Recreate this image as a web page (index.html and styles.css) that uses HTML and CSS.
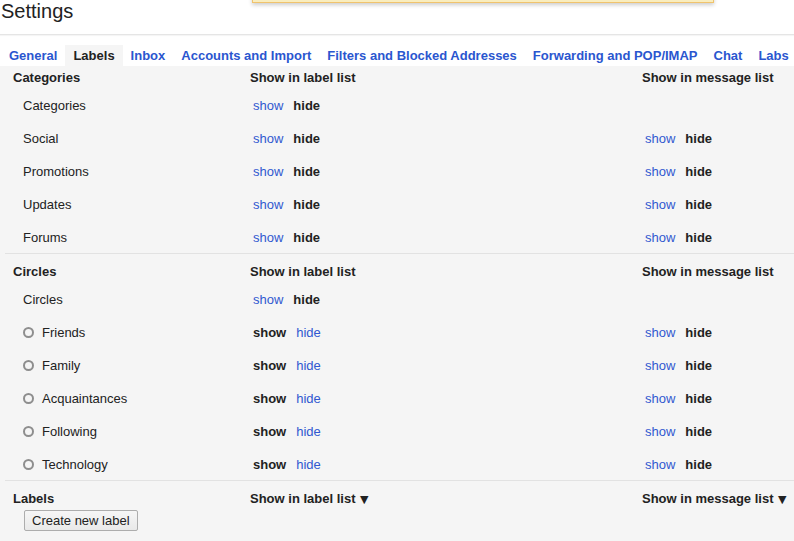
FILE: index.html
```html
<!DOCTYPE html>
<html>
<head>
<meta charset="utf-8">
<link rel="stylesheet" href="styles.css">
</head>
<body>
<div class="notice"></div>
<div class="topbar"><h1 class="title">Settings</h1></div>
<nav class="tabs">
  <a class="tab">General</a>
  <a class="tab active">Labels</a>
  <a class="tab">Inbox</a>
  <a class="tab">Accounts and Import</a>
  <a class="tab">Filters and Blocked Addresses</a>
  <a class="tab">Forwarding and POP/IMAP</a>
  <a class="tab">Chat</a>
  <a class="tab">Labs</a>
</nav>
<main class="panel">
  <section class="section first">
    <div class="row head">
      <div class="c1">Categories</div>
      <div class="c2">Show in label list</div>
      <div class="c3">Show in message list</div>
    </div>
    <div class="row">
      <div class="c1 name">Categories</div>
      <div class="c2 opts"><span class="opt link">show</span><span class="opt sel">hide</span></div>
      <div class="c3"></div>
    </div>
    <div class="row">
      <div class="c1 name">Social</div>
      <div class="c2 opts"><span class="opt link">show</span><span class="opt sel">hide</span></div>
      <div class="c3 opts"><span class="opt link">show</span><span class="opt sel">hide</span></div>
    </div>
    <div class="row">
      <div class="c1 name">Promotions</div>
      <div class="c2 opts"><span class="opt link">show</span><span class="opt sel">hide</span></div>
      <div class="c3 opts"><span class="opt link">show</span><span class="opt sel">hide</span></div>
    </div>
    <div class="row">
      <div class="c1 name">Updates</div>
      <div class="c2 opts"><span class="opt link">show</span><span class="opt sel">hide</span></div>
      <div class="c3 opts"><span class="opt link">show</span><span class="opt sel">hide</span></div>
    </div>
    <div class="row">
      <div class="c1 name">Forums</div>
      <div class="c2 opts"><span class="opt link">show</span><span class="opt sel">hide</span></div>
      <div class="c3 opts"><span class="opt link">show</span><span class="opt sel">hide</span></div>
    </div>
  </section>
  <section class="section">
    <div class="row head">
      <div class="c1">Circles</div>
      <div class="c2">Show in label list</div>
      <div class="c3">Show in message list</div>
    </div>
    <div class="row">
      <div class="c1 name">Circles</div>
      <div class="c2 opts"><span class="opt link">show</span><span class="opt sel">hide</span></div>
      <div class="c3"></div>
    </div>
    <div class="row">
      <div class="c1 name"><span class="ring"></span>Friends</div>
      <div class="c2 opts"><span class="opt sel">show</span><span class="opt link">hide</span></div>
      <div class="c3 opts"><span class="opt link">show</span><span class="opt sel">hide</span></div>
    </div>
    <div class="row">
      <div class="c1 name"><span class="ring"></span>Family</div>
      <div class="c2 opts"><span class="opt sel">show</span><span class="opt link">hide</span></div>
      <div class="c3 opts"><span class="opt link">show</span><span class="opt sel">hide</span></div>
    </div>
    <div class="row">
      <div class="c1 name"><span class="ring"></span>Acquaintances</div>
      <div class="c2 opts"><span class="opt sel">show</span><span class="opt link">hide</span></div>
      <div class="c3 opts"><span class="opt link">show</span><span class="opt sel">hide</span></div>
    </div>
    <div class="row">
      <div class="c1 name"><span class="ring"></span>Following</div>
      <div class="c2 opts"><span class="opt sel">show</span><span class="opt link">hide</span></div>
      <div class="c3 opts"><span class="opt link">show</span><span class="opt sel">hide</span></div>
    </div>
    <div class="row">
      <div class="c1 name"><span class="ring"></span>Technology</div>
      <div class="c2 opts"><span class="opt sel">show</span><span class="opt link">hide</span></div>
      <div class="c3 opts"><span class="opt link">show</span><span class="opt sel">hide</span></div>
    </div>
  </section>
  <section class="section">
    <div class="row head">
      <div class="c1">Labels</div>
      <div class="c2">Show in label list <span class="arrow">▼</span></div>
      <div class="c3">Show in message list <span class="arrow">▼</span></div>
    </div>
    <div class="btnrow"><button class="btn">Create new label</button></div>
  </section>
</main>
</body>
</html>
```

FILE: styles.css
```css
html, body {
  margin: 0;
  padding: 0;
  background: #fff;
  font-family: Arial, "Liberation Sans", sans-serif;
  font-size: 13px;
  color: #222;
  overflow: hidden;
}

.notice {
  position: absolute;
  left: 252px;
  top: -30px;
  width: 460px;
  height: 31px;
  background: #f9edbe;
  border: 1px solid #f0c36d;
  box-shadow: 0 2px 4px rgba(0, 0, 0, 0.2);
}

.topbar {
  height: 34px;
  border-bottom: 1px solid #e5e5e5;
  box-shadow: 0 1px 1px rgba(0, 0, 0, 0.04);
}

.title {
  margin: 0;
  padding-left: 1px;
  font-size: 20px;
  font-weight: normal;
  line-height: 22px;
  color: #222;
}

.tabs {
  display: flex;
  margin-top: 10px;
  padding-left: 1px;
  white-space: nowrap;
}

.tab {
  padding: 0 8px;
  line-height: 21px;
  font-weight: bold;
  color: #2a56cf;
}

.tab.active {
  background: #f5f5f5;
  color: #222;
}

.panel {
  background: #f5f5f5;
  height: 475px;
}

.section {
  padding-top: 6px;
  border-top: 1px solid #e2e2e2;
  margin-left: 5px;
}

.section.first {
  padding-top: 0;
  border-top: 0;
}

.row {
  display: grid;
  grid-template-columns: 237px 392px 1fr;
  padding-left: 8px;
  height: 33px;
  align-items: center;
  white-space: nowrap;
}

.row.head {
  height: 22px;
  font-weight: bold;
  color: #222;
}

.name {
  display: flex;
  align-items: center;
  padding-left: 10px;
  padding-top: 1px;
  color: #222;
}

.ring {
  width: 7px;
  height: 7px;
  border: 2px solid #8e8e8e;
  border-radius: 50%;
  margin-right: 8px;
}

.opts {
  display: flex;
  gap: 4px;
  padding-top: 1px;
}

.opt {
  padding: 0 3px;
}

.link {
  color: #3158d0;
}

.sel {
  font-weight: bold;
  color: #222;
}

.arrow {
  font-size: 11px;
  margin-left: 1px;
  font-family: "DejaVu Sans", sans-serif;
}

.btnrow {
  padding-left: 19px;
  padding-top: 1px;
}

.btn {
  height: 21px;
  padding: 0 7px;
  font-family: Arial, "Liberation Sans", sans-serif;
  font-size: 13px;
  color: #222;
  background: linear-gradient(#f6f6f6, #e9e9e9);
  border: 1px solid #adadad;
  border-radius: 2px;
}
```
